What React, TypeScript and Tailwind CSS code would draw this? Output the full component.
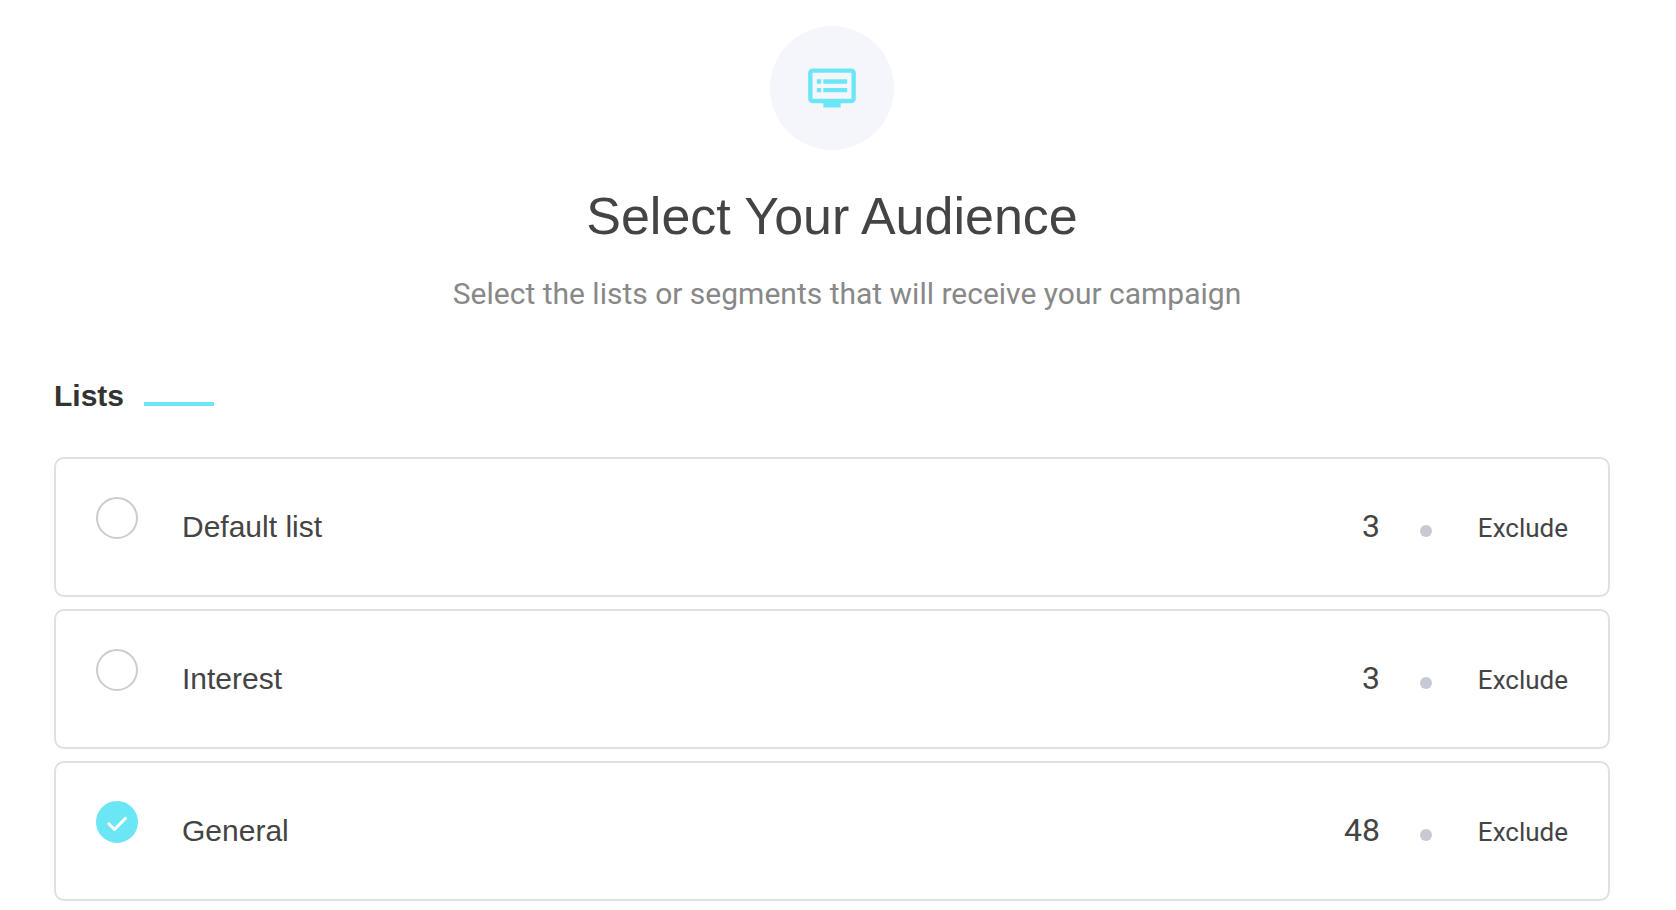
import { useState } from "react";
import { MdDvr } from "react-icons/md";

type List = {
  id: string;
  name: string;
  count: number;
};

const lists: List[] = [
  { id: "default", name: "Default list", count: 3 },
  { id: "interest", name: "Interest", count: 3 },
  { id: "general", name: "General", count: 48 },
];

type ListRowProps = {
  list: List;
  checked: boolean;
  onToggle: () => void;
};

function ListRow({ list, checked, onToggle }: ListRowProps) {
  return (
    <li className="flex items-center px-10 py-[38px] border-2 border-[#e0e0e0] rounded-[10px]">
      <div className="relative self-start shrink-0 w-[42px] h-[42px]">
        <input
          id={list.id}
          type="checkbox"
          checked={checked}
          onChange={onToggle}
          className="block appearance-none w-full h-full rounded-full border-2 border-[#cccccc] checked:border-[#6be6f5] checked:bg-[#6be6f5] cursor-pointer"
        />
        {checked && (
          <svg
            viewBox="0 0 42 42"
            fill="none"
            stroke="white"
            strokeWidth="3"
            strokeLinecap="round"
            strokeLinejoin="round"
            className="absolute inset-0 pointer-events-none"
          >
            <path d="M12.8 22.8 18.5 28.5 29.5 17.3" />
          </svg>
        )}
      </div>
      <label htmlFor={list.id} className="flex-1 ml-11 text-[30px] leading-[60px] cursor-pointer">
        {list.name}
      </label>
      {/* Count + exclude */}
      <div className="flex items-baseline font-['Roboto',sans-serif]">
        <span className="text-[32px] leading-[36px]">{list.count}</span>
        <span className="w-3 h-3 ml-10 mr-[46px] rounded-full bg-[#c7cad5]" />
        <button type="button" className="text-[26px] leading-[36px] cursor-pointer">
          Exclude
        </button>
      </div>
    </li>
  );
}

function App() {
  const [selected, setSelected] = useState<string[]>(["general"]);

  const toggle = (id: string) => {
    setSelected((prev) =>
      prev.includes(id) ? prev.filter((item) => item !== id) : [...prev, id]
    );
  };

  return (
    <main className="pl-[54px] pr-[66px] pt-[26px] pb-2 bg-white text-[#444444] font-['Liberation_Sans',Arial,sans-serif]">
      {/* Header */}
      <header className="flex flex-col items-center text-center">
        <div className="flex items-center justify-center w-[124px] h-[124px] rounded-full bg-[#f4f6fb]">
          <MdDvr className="w-[52px] h-[52px] text-[#6be6f5]" />
        </div>
        <h1 className="mt-9 text-[52px] leading-[60px]">Select Your Audience</h1>
        <p className="mt-7 pl-[30px] text-[30px] leading-[40px] text-[#888888] font-['Roboto',sans-serif]">
          Select the lists or segments that will receive your campaign
        </p>
      </header>

      {/* Lists */}
      <section>
        <div className="flex items-baseline mt-16">
          <h2 className="text-[30px] leading-[36px] font-bold text-[#333333]">Lists</h2>
          <span className="w-[70px] h-1 ml-5 bg-[#6be6f5]" />
        </div>
        <ul className="flex flex-col gap-3 mt-[43px]">
          {lists.map((list) => (
            <ListRow
              key={list.id}
              list={list}
              checked={selected.includes(list.id)}
              onToggle={() => toggle(list.id)}
            />
          ))}
        </ul>
      </section>
    </main>
  );
}

export default App;
